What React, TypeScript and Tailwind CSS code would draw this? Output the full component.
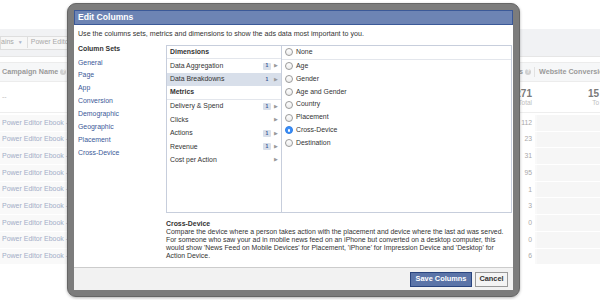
const LINKS = ['General', 'Page', 'App', 'Conversion', 'Demographic', 'Geographic', 'Placement', 'Cross-Device'];

type Item = { label: string; header?: boolean; badge?: boolean; selected?: boolean; arrow?: boolean };

const ITEMS: Item[] = [
  { label: 'Dimensions', header: true },
  { label: 'Data Aggregation', badge: true, arrow: true },
  { label: 'Data Breakdowns', badge: true, arrow: true, selected: true },
  { label: 'Metrics', header: true },
  { label: 'Delivery & Spend', badge: true, arrow: true },
  { label: 'Clicks', arrow: true },
  { label: 'Actions', badge: true, arrow: true },
  { label: 'Revenue', badge: true, arrow: true },
  { label: 'Cost per Action', arrow: true },
];

const OPTIONS = ['None', 'Age', 'Gender', 'Age and Gender', 'Country', 'Placement', 'Cross-Device', 'Destination'];
const CLICKS = ['112', '23', '31', '95', '1', '3', '0', '0', '6'];

function Radio({ checked }: { checked: boolean }) {
  if (checked) {
    return (
      <span className="flex h-[8px] w-[8px] items-center justify-center rounded-full border border-[#2f7fe6] bg-[#3d8ef7]">
        <span className="h-[2.5px] w-[2.5px] rounded-full bg-white" />
      </span>
    );
  }
  return <span className="h-[8px] w-[8px] rounded-full border border-[#9a9a9a] bg-gradient-to-b from-white to-[#ececec]" />;
}

function Background() {
  return (
    <div className="flex h-full flex-col">
      <div className="h-[29px]" />
      {/* toolbar */}
      <div className="flex h-[28px] items-center border-b border-[#e6e6e6] bg-[#f1f2f4]">
        <div className="flex h-[14px] items-center border border-[#dedede] bg-[#f7f7f7] text-[7px] text-[#a8a8a8]">
          <span className="pr-[4px]">ains</span>
          <span className="pr-[4px] text-[5px] text-[#aab4cc]">▼</span>
          <span className="border-l border-[#dedede] pl-[3px] pr-[4px]">Power Editor</span>
        </div>
      </div>
      <div className="h-[5px]" />
      {/* header */}
      <div className="flex h-[20px] items-center border-y border-[#ececec] bg-[#f6f7f8] text-[7.2px] text-[#9a9a9a]">
        <div className="flex flex-1 items-center gap-[2px] pl-[2px] font-semibold">
          Campaign Name
          <span className="flex h-[6px] w-[6px] items-center justify-center rounded-full bg-[#d0d0d0] text-[4.5px] text-white">?</span>
        </div>
        <div className="flex w-[40px] items-center justify-end gap-[2px] border-r border-[#e2e2e2] pr-[3px] font-semibold">
          cks
          <span className="flex h-[6px] w-[6px] items-center justify-center rounded-full bg-[#d0d0d0] text-[4.5px] text-white">?</span>
        </div>
        <div className="w-[65px] overflow-hidden whitespace-nowrap pl-[4px] font-semibold">Website Conversions</div>
      </div>
      {/* summary */}
      <div className="flex h-[31px] items-center border-b border-[#eeeeee]">
        <div className="flex-1 pl-[2px] text-[7px] text-[#bbbbbb]">--</div>
        <div className="flex w-[40px] flex-col items-end pr-[3px]">
          <span className="text-[10px] font-bold leading-[11px] text-[#7a7a7a]">271</span>
          <span className="text-[6.5px] leading-[8px] text-[#c0c0c0]">Total</span>
        </div>
        <div className="flex w-[65px] flex-col items-end pr-[1px]">
          <span className="text-[10px] font-bold leading-[11px] text-[#7a7a7a]">15</span>
          <span className="text-[6.5px] leading-[8px] text-[#c0c0c0]">To</span>
        </div>
      </div>
      <div className="h-[2px]" />
      {CLICKS.map((c, i) => (
        <div key={i} className="flex h-[16.7px] items-center border-b-[1.5px] border-white bg-[#f9f9f9]">
          <div className="flex-1 pl-[2px] text-[7px] text-[#a3adc7]">Power Editor Ebook - 1</div>
          <div className="flex h-full w-[40px] items-center justify-end bg-white pr-[3px] text-[6.8px] text-[#a8a8a8]">{c}</div>
          <div className="ml-[2px] h-full w-[63px] bg-[#f6f6f6]" />
        </div>
      ))}
    </div>
  );
}

export default function App() {
  return (
    <div className="relative h-[300px] w-[600px] overflow-hidden bg-white font-['Liberation_Sans',Arial,sans-serif]">
      <Background />

      {/* dialog */}
      <div className="absolute left-[67px] top-[3px] h-[294px] w-[453px] rounded-[9px] border border-[#666666] bg-[#7c7c7c] p-[6px] shadow-[0_1px_3px_rgba(0,0,0,0.3)]">
        <div className="flex h-full flex-col bg-white">
          <div className="h-[15px] border border-[#3b5998] bg-[#6d84b4] pl-[3px] text-[8.6px] font-bold leading-[13px] text-white">
            Edit Columns
          </div>

          <div className="flex-1 pl-[4px] pr-[1px]">
            <p className="mt-[5px] whitespace-nowrap text-[7.1px] leading-[8px] text-[#333]">
              Use the columns sets, metrics and dimensions to show the ads data most important to you.
            </p>

            <div className="mt-[7px] flex">
              <div className="w-[88px]">
                <div className="text-[6.9px] font-bold leading-[8px] text-[#333]">Column Sets</div>
                <div className="mt-[3.5px]">
                  {LINKS.map((l) => (
                    <div key={l} className="h-[12.9px] text-[6.9px] leading-[12.9px] text-[#3b5998]">
                      {l}
                    </div>
                  ))}
                </div>
              </div>

              <div className="flex h-[168px] flex-1 border border-[#c7cedc]">
                <div className="w-[115px] border-r border-[#c7cedc]">
                  {ITEMS.map((it) => (
                    <div
                      key={it.label}
                      className={
                        'flex h-[13.45px] items-center pl-[3px] pr-[3px] text-[6.9px] text-[#333] ' +
                        (it.header ? 'border-b border-[#e3e6ec] font-bold ' : '') +
                        (it.selected ? 'bg-[#d8dfea] ' : '')
                      }
                    >
                      <span className="flex-1 whitespace-nowrap">{it.label}</span>
                      {it.badge && (
                        <span className="mr-[3px] flex h-[7px] w-[8px] items-center justify-center rounded-[1px] bg-[#d8dfea] text-[5px] font-bold text-[#3b5998]">
                          1
                        </span>
                      )}
                      {it.arrow && <span className="text-[5px] text-[#999]">▶</span>}
                    </div>
                  ))}
                </div>
                <div className="flex-1">
                  {OPTIONS.map((o, i) => (
                    <div
                      key={o}
                      className={
                        'flex items-center gap-[3px] pl-[3px] text-[6.9px] text-[#333] ' +
                        (i === 0 ? 'h-[13.5px] border-b border-[#e3e6ec]' : 'h-[12.9px]')
                      }
                    >
                      <Radio checked={o === 'Cross-Device'} />
                      <span>{o}</span>
                    </div>
                  ))}
                </div>
              </div>
            </div>

            <div className="ml-[88px] mt-[7px] whitespace-nowrap text-[6.9px] leading-[8px] text-[#333]">
              <div className="font-bold">Cross-Device</div>
              <div>Compare the device where a person takes action with the placement and device where the last ad was served.</div>
              <div>For someone who saw your ad in mobile news feed on an iPhone but converted on a desktop computer, this</div>
              <div>would show 'News Feed on Mobile Devices' for Placement, 'iPhone' for Impression Device and 'Desktop' for</div>
              <div>Action Device.</div>
            </div>
          </div>

          <div className="flex h-[23px] items-center justify-end gap-[3px] border-t border-[#cccccc] bg-[#f2f2f2] pr-[5px]">
            <button className="h-[15px] w-[62px] border border-[#29447e] bg-[#5b74a8] text-[7.4px] font-bold text-white">
              Save Columns
            </button>
            <button className="h-[15px] w-[33px] border border-[#999999] bg-[#f4f4f4] text-[7.4px] font-bold text-[#333]">
              Cancel
            </button>
          </div>
        </div>
      </div>
    </div>
  );
}
